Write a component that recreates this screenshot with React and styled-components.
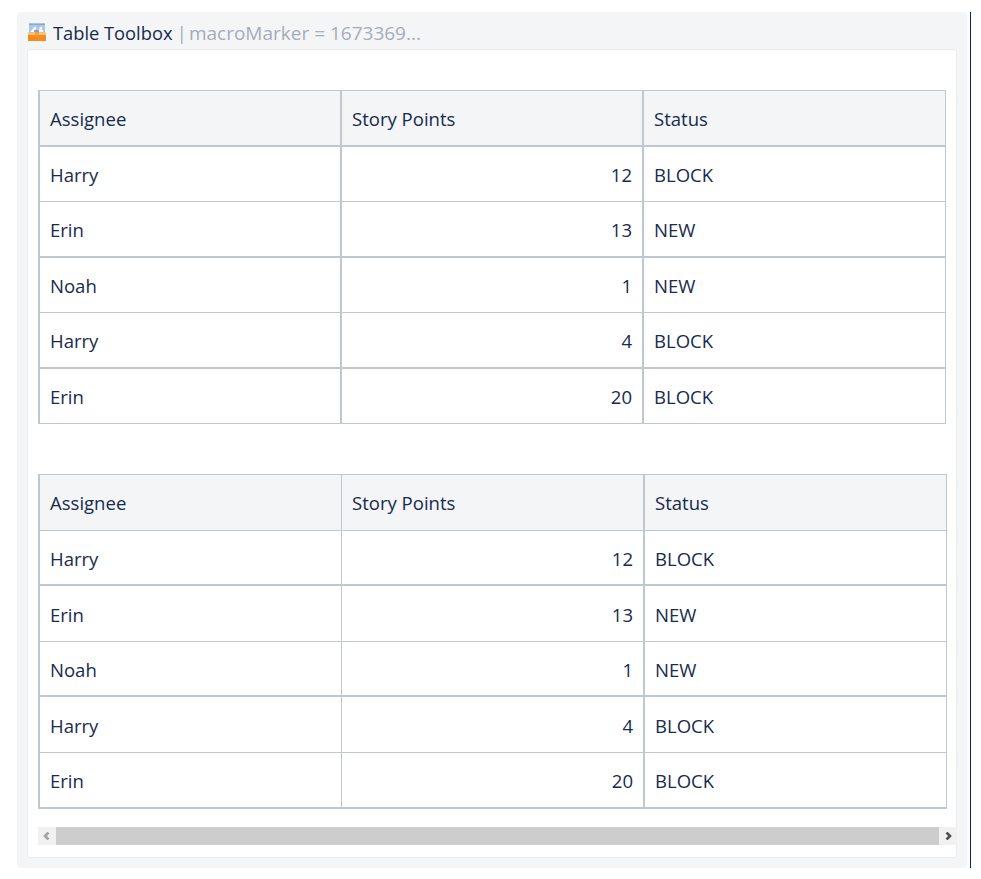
import React from "react";
import styled, { createGlobalStyle } from "styled-components";

const Global = createGlobalStyle`
  html, body { margin: 0; padding: 0; background: #fff; }
  body { font-family: "Open Sans", "Noto Sans", "Liberation Sans", sans-serif; color: #172b4d; }
`;

const Page = styled.div`
  display: flex;
  align-items: stretch;
  width: 954px;
  height: 856px;
  margin: 12px 0 0 17px;
  border-right: 1px solid #052a66;
  box-sizing: border-box;
`;

const Panel = styled.section`
  box-sizing: border-box;
  width: 950px;
  height: 856px;
  padding: 0 10px 10px;
  background: #f4f5f7;
  border-radius: 4px;
  display: flex;
  flex-direction: column;
`;

const Title = styled.header`
  box-sizing: border-box;
  display: flex;
  align-items: center;
  height: 37px;
  padding-top: 4px;
  white-space: nowrap;
`;

const TitleIcon = styled.svg`
  width: 18px;
  height: 18px;
  margin: -2px 7px 0 1px;
  flex: none;
`;

const TitleMain = styled.span`
  color: #172b4d;
  font-size: 18.3px;
`;

const TitlePipe = styled.span`
  color: #a5adba;
  margin: 0 2px 0 4px;
  font-size: 19px;
`;

const TitleMeta = styled.span`
  color: #a5adba;
  font-size: 19px;
`;

const Body = styled.div`
  box-sizing: border-box;
  flex: 1;
  position: relative;
  background: #fff;
  border: 1px solid #ebecf0;
  border-radius: 3px;
  padding: 40px 0 0 10px;
`;

const Table = styled.table`
  table-layout: fixed;
  border-collapse: separate;
  border-spacing: 0;
  width: ${(p) => p.$width}px;
  margin-bottom: 50px;
  font-size: 18.55px;
  border-top: 1px solid #c1c7d0;
  &:last-of-type { margin-bottom: 0; }
`;

const Cell = styled.td`
  box-sizing: border-box;
  height: ${(p) => p.$h}px;
  padding: ${(p) => p.$top}px 10px 0 10px;
  text-align: ${(p) => (p.$num ? "right" : "left")};
  font-weight: 400;
  color: #172b4d;
  background: ${(p) => (p.$head ? "#f4f5f7" : "#fff")};
  border-bottom: ${(p) => p.$bottom}px solid #c1c7d0;
  border-right: ${(p) => p.$right}px solid #c1c7d0;
  border-left: ${(p) => (p.$first ? "2px solid #c1c7d0" : "0")};
`;

const Scrollbar = styled.div`
  display: flex;
  width: 919px;
  height: 18px;
  margin-top: 18px;
  background: #f1f1f1;
`;

const ScrollButton = styled.div`
  width: 18px;
  height: 18px;
  flex: none;
  display: flex;
  align-items: center;
  justify-content: center;
  color: ${(p) => (p.$active ? "#505050" : "#a3a3a3")};
`;

const ScrollThumb = styled.div`
  flex: 1;
  background: #cdcdcd;
`;

const Chevron = styled.svg`
  width: 8px;
  height: 8px;
`;

const rows = [
  ["Harry", "12", "BLOCK"],
  ["Erin", "13", "NEW"],
  ["Noah", "1", "NEW"],
  ["Harry", "4", "BLOCK"],
  ["Erin", "20", "BLOCK"],
];

const specs = [
  {
    width: 908,
    cols: [304, 302, 302],
    rights: [2, 2, 1],
    bottoms: [2, 1, 2, 1, 2, 1],
    heights: [56, 55, 56, 55, 56, 55],
    headTop: 1,
  },
  {
    width: 909,
    cols: [304, 303, 302],
    rights: [1, 2, 1],
    bottoms: [1, 2, 1, 2, 1, 2],
    heights: [56, 55, 56, 55, 56, 56],
    headTop: 0,
  },
];

function DataTable({ spec }) {
  return (
    <Table $width={spec.width}>
      <colgroup>
        {spec.cols.map((w, i) => (
          <col key={i} width={w} />
        ))}
      </colgroup>
      <thead>
        <tr>
          {["Assignee", "Story Points", "Status"].map((h, i) => (
            <Cell
              as="th"
              key={h}
              $head
              $first={i === 0}
              $top={spec.headTop}
              $h={spec.heights[0]}
              $bottom={spec.bottoms[0]}
              $right={spec.rights[i]}
            >
              {h}
            </Cell>
          ))}
        </tr>
      </thead>
      <tbody>
        {rows.map((r, ri) => (
          <tr key={ri}>
            {r.map((c, i) => (
              <Cell
                key={i}
                $first={i === 0}
                $num={i === 1}
                $top={1}
                $h={spec.heights[ri + 1]}
                $bottom={spec.bottoms[ri + 1]}
                $right={spec.rights[i]}
              >
                {c}
              </Cell>
            ))}
          </tr>
        ))}
      </tbody>
    </Table>
  );
}

export default function App() {
  return (
    <>
      <Global />
      <Page>
        <Panel>
          <Title>
            <TitleIcon viewBox="0 0 18 18">
              <rect x="1" y="0.5" width="16" height="10" fill="#a9c8e8" />
              <rect x="1" y="0.5" width="16" height="1.5" fill="#8aa9cc" />
              <path d="M2.5 9 L6.5 3.5 L8.5 5 L5.5 9 Z" fill="#fff" />
              <path d="M10 9 L12 4 L14.5 3.5 L14 6 L15.5 9 Z" fill="#f4f8fc" />
              <path d="M6 7 h5 v2 h-5 Z" fill="#7fa6d0" />
              <rect x="0" y="9.5" width="18" height="2.5" fill="#fbc36a" />
              <rect x="0" y="12" width="18" height="6" fill="#f68a1e" />
              <rect x="7" y="9" width="4" height="3.5" fill="#f7a24a" />
            </TitleIcon>
            <TitleMain>Table Toolbox</TitleMain>
            <TitlePipe>|</TitlePipe>
            <TitleMeta>macroMarker = 1673369...</TitleMeta>
          </Title>
          <Body>
            <DataTable spec={specs[0]} />
            <DataTable spec={specs[1]} />
            <Scrollbar>
              <ScrollButton>
                <Chevron viewBox="0 0 8 8">
                  <path d="M5.5 0.5 L2 4 L5.5 7.5" fill="none" stroke="currentColor" strokeWidth="2.6" />
                </Chevron>
              </ScrollButton>
              <ScrollThumb />
              <ScrollButton $active>
                <Chevron viewBox="0 0 8 8">
                  <path d="M2.5 0.5 L6 4 L2.5 7.5" fill="none" stroke="currentColor" strokeWidth="2.6" />
                </Chevron>
              </ScrollButton>
            </Scrollbar>
          </Body>
        </Panel>
      </Page>
    </>
  );
}
